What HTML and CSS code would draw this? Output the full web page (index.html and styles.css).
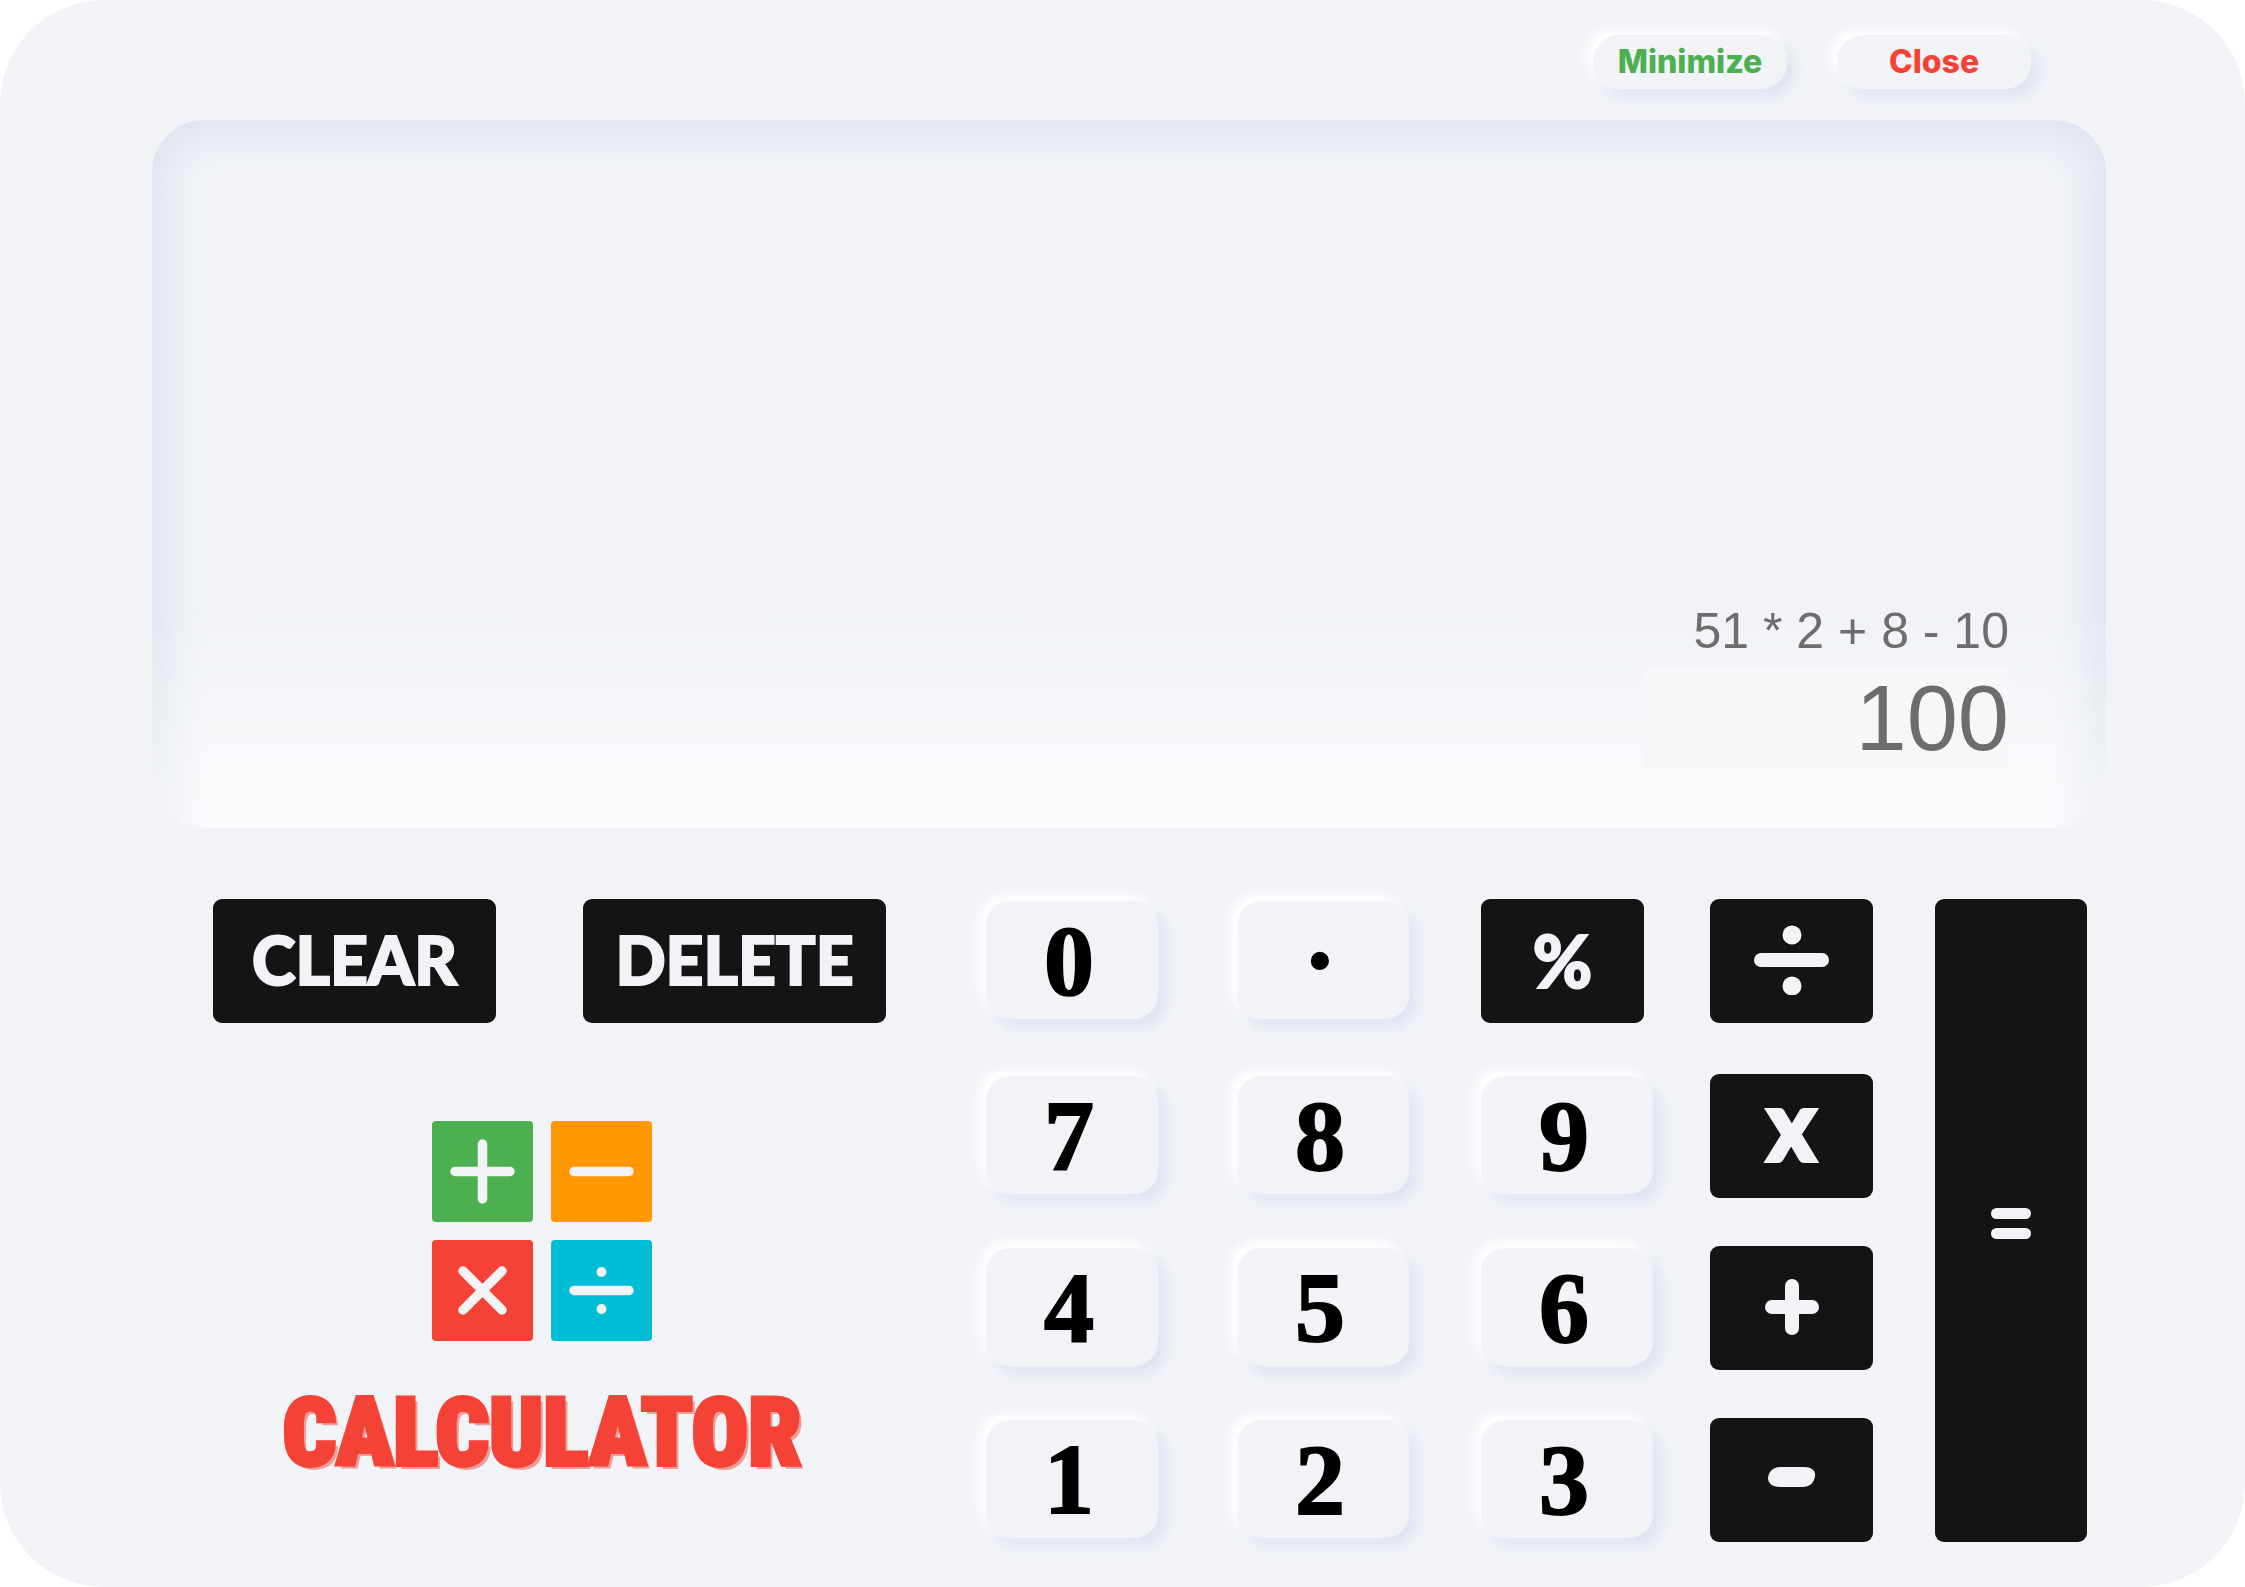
FILE: index.html
```html
<!DOCTYPE html>
<html lang="en">
<head>
<meta charset="utf-8">
<title>Calculator</title>
<link rel="stylesheet" href="styles.css">
</head>
<body>
<main class="device">
  <header class="window-bar">
    <button class="window-btn window-btn-min" type="button">Minimize</button>
    <button class="window-btn window-btn-close" type="button">Close</button>
  </header>

  <section class="screen" aria-label="Display">
    <div class="expression">51 * 2 + 8 - 10</div>
    <output class="result">100</output>
  </section>

  <section class="controls">
    <div class="side">
      <div class="side-actions">
        <button class="key-dark key-clear" type="button">CLEAR</button>
        <button class="key-dark key-delete" type="button">DELETE</button>
      </div>
      <div class="brand">
        <svg class="brand-logo" viewBox="0 0 220 220" aria-hidden="true">
          <rect width="101" height="101" rx="4" fill="#4caf50"/>
          <rect x="119" width="101" height="101" rx="4" fill="#ff9800"/>
          <rect y="119" width="101" height="101" rx="4" fill="#f44336"/>
          <rect x="119" y="119" width="101" height="101" rx="4" fill="#00bcd4"/>
          <g stroke="#f1f3f7" stroke-width="9.5" stroke-linecap="round">
            <path d="M50.500 23V78M23 50.500H78"/>
            <path d="M142 50.500H197"/>
            <path d="M31 150L70 189M70 150L31 189"/>
            <path d="M142 169.500H197"/>
          </g>
          <circle cx="169.500" cy="151" r="5" fill="#f1f3f7"/>
          <circle cx="169.500" cy="188" r="5" fill="#f1f3f7"/>
        </svg>
        <h1 class="brand-name">CALCULATOR</h1>
      </div>
    </div>

    <div class="keypad">
      <button class="key-light" type="button">0</button>
      <button class="key-light" type="button">·</button>
      <button class="key-dark key-op" type="button">%</button>
      <button class="key-dark key-op" type="button" aria-label="Divide">
        <svg width="76" height="70" viewBox="0 0 76 70" fill="#f1f3f7" stroke="none"><circle cx="38" cy="10" r="9.500"/><rect y="28" width="75" height="14" rx="7"/><circle cx="38" cy="61" r="9.500"/></svg>
      </button>
      <button class="key-dark key-equals" type="button" aria-label="Equals">
        <svg width="40" height="32" viewBox="0 0 40 32" fill="#f1f3f7"><rect width="40" height="11" rx="5.500"/><rect y="20" width="40" height="11" rx="5.500"/></svg>
      </button>

      <button class="key-light" type="button">7</button>
      <button class="key-light" type="button">8</button>
      <button class="key-light" type="button">9</button>
      <button class="key-dark key-op key-times" type="button">X</button>

      <button class="key-light" type="button">4</button>
      <button class="key-light" type="button">5</button>
      <button class="key-light" type="button">6</button>
      <button class="key-dark key-op" type="button" aria-label="Plus">
        <svg width="56" height="56" viewBox="0 0 56 56" fill="#f1f3f7"><rect x="21" width="14" height="56" rx="7"/><rect x="1" y="21" width="54" height="14" rx="7"/></svg>
      </button>

      <button class="key-light" type="button">1</button>
      <button class="key-light" type="button">2</button>
      <button class="key-light" type="button">3</button>
      <button class="key-dark key-op" type="button" aria-label="Minus">
        <svg width="48" height="24" viewBox="0 0 48 24" fill="#f1f3f7"><path d="M14 0H36C44 0 48 4 47 9C46 16 42 20 34 20H12C4 20 0 16 0 11C1 4 5 0 14 0Z"/></svg>
      </button>
    </div>
  </section>
</main>
</body>
</html>
```
FILE: styles.css
```css
* {
  box-sizing: border-box;
}

body {
  margin: 0;
  background: #fff;
}

button {
  margin: 0;
  padding: 0;
  border: 0;
  cursor: pointer;
}

.device {
  display: flex;
  flex-direction: column;
  min-height: 100vh;
  padding: 35px 139px 45px 152px;
  border-radius: 104px;
  background: #f1f3f7;
}

.window-bar {
  display: flex;
  justify-content: flex-end;
  gap: 50px;
  margin-bottom: 31px;
  padding-right: 75px;
}

.window-btn {
  width: 194px;
  height: 54px;
  border-radius: 26px;
  background: #f1f3f7;
  box-shadow: -6px -6px 12px #fff, 8px 8px 12px #dfe4f1;
  font: 800 32px/54px Inter, sans-serif;
}

.window-btn-min {
  color: #4caf50;
}

.window-btn-close {
  color: #f44336;
}

.screen {
  position: relative;
  display: flex;
  flex: 1;
  flex-direction: column;
  align-items: flex-end;
  justify-content: flex-end;
  margin-bottom: 71px;
  padding: 0 97px 59px;
}

/* recessed rim that fades out towards the lower edge */
.screen::before,
.screen::after {
  content: "";
  position: absolute;
  inset: 0;
  border-radius: 52px;
}

.screen::before {
  box-shadow: inset 0 0 40px 16px #dee3ef;
  mask-image: linear-gradient(#000 70%, transparent 95%);
}

.screen::after {
  background: linear-gradient(transparent 68%, #f8f9fb 92%, #f9fafc);
  mask-image: linear-gradient(to right, transparent 8px, #000 56px, #000 calc(100% - 56px), transparent calc(100% - 8px));
}

.expression,
.result {
  z-index: 1;
  color: #6d6d6d;
  font-family: "Liberation Sans", Arial, sans-serif;
  text-align: right;
}

.expression {
  padding-bottom: 4px;
  font-size: 50px;
  line-height: 64px;
}

.result {
  width: 365px;
  background: #f5f7f9;
  font-size: 92px;
  line-height: 102px;
}

.controls {
  display: flex;
  gap: 100px;
  padding: 0 19px 0 61px;
}

.side {
  flex: 673;
}

.side-actions {
  display: flex;
  justify-content: space-between;
}

.key-dark {
  height: 124px;
  padding-bottom: 2px;
  border-radius: 9px;
  background: #151314;
  color: #f1f3f7;
  font: 900 66px/122px Lato, sans-serif;
  -webkit-text-stroke: 2px #f1f3f7;
}

.key-dark svg {
  display: block;
  margin: 0 auto;
}

.key-clear {
  width: 283px;
}

.key-delete {
  width: 303px;
}

.brand {
  display: flex;
  flex-direction: column;
  align-items: center;
  padding: 98px 15px 0 0;
}

.brand-logo {
  width: 220px;
  height: 220px;
}

.brand-name {
  margin: 42px 0 0;
  color: #f44336;
  font: 900 94px/100px "Roboto Condensed", Roboto, sans-serif;
  -webkit-text-stroke: 4px #f44336;
  text-shadow: 4px 4px 0 #e9a09c;
}

.keypad {
  display: grid;
  flex: 1101;
  grid-template-columns: 251fr 244fr 229fr 225fr 152fr;
  grid-template-rows: 127px repeat(3, 124px);
  row-gap: 48px;
}

.key-light {
  width: 172px;
  height: 118px;
  margin-top: 2px;
  padding: 2px 6px 0 0;
  border-radius: 24px;
  background: #f1f3f7;
  box-shadow: -6px -6px 12px #fff, 8px 8px 12px #dfe4f1;
  color: #000;
  font: 700 100px/116px "Liberation Serif", serif;
  -webkit-text-stroke: 2px #000;
}

.key-op {
  width: 163px;
  font-size: 72px;
}

.key-times {
  font-size: 66px;
  -webkit-text-stroke: 6px #f1f3f7;
}

.key-equals {
  grid-row: 1 / 5;
  grid-column: 5;
  height: auto;
  padding-top: 8px;
}
```
